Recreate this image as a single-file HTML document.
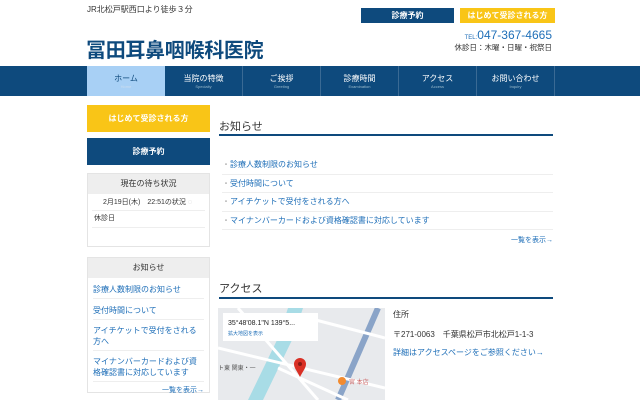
<!DOCTYPE html>
<html><head><meta charset="utf-8"><style>
*{margin:0;padding:0;box-sizing:border-box}
body{width:640px;height:400px;overflow:hidden;background:#fff;font-family:"Liberation Sans","Noto Sans CJK JP",sans-serif;color:#333;position:relative}
.a{position:absolute}
.lnk{color:#1f6fb8}
</style></head><body>
<div class="a" style="left:87px;top:4px;font-size:8px">JR北松戸駅西口より徒歩３分</div>
<div class="a" style="left:361px;top:8px;width:93px;height:15px;background:#0e4a7d;color:#fff;font-size:8px;text-align:center;line-height:15px;font-weight:bold">診療予約</div>
<div class="a" style="left:460px;top:8px;width:95px;height:15px;background:#f9c517;color:#fff;font-size:8px;text-align:center;line-height:15px;font-weight:bold">はじめて受診される方</div>
<div class="a" style="left:86px;top:34px;font-size:20px;color:#0e4a7d;font-weight:bold;letter-spacing:-0.3px">冨田耳鼻咽喉科医院</div>
<div class="a" style="right:88px;top:28px;font-size:12px;color:#1f6fb8"><span style="font-size:6px">TEL:</span>047-367-4665</div>
<div class="a" style="right:88px;top:42px;font-size:7.5px">休診日：木曜・日曜・祝祭日</div>
<div class="a" style="left:0;top:66px;width:640px;height:30px;background:#0e4a7d"></div>
<div class="a" style="left:87px;top:66px;display:flex">
<div style="width:78px;height:30px;background:#a8d0f5;color:#0e4a7d;text-align:center;font-size:8px;padding-top:7px">ホーム<div style="font-size:4px;color:#cde">Home</div></div>
<div style="width:78px;height:30px;border-right:1px solid #3a6a94;color:#fff;text-align:center;font-size:8px;padding-top:7px">当院の特徴<div style="font-size:4px;color:#9bc">Specialty</div></div>
<div style="width:78px;height:30px;border-right:1px solid #3a6a94;color:#fff;text-align:center;font-size:8px;padding-top:7px">ご挨拶<div style="font-size:4px;color:#9bc">Greeting</div></div>
<div style="width:78px;height:30px;border-right:1px solid #3a6a94;color:#fff;text-align:center;font-size:8px;padding-top:7px">診療時間<div style="font-size:4px;color:#9bc">Examination</div></div>
<div style="width:78px;height:30px;border-right:1px solid #3a6a94;color:#fff;text-align:center;font-size:8px;padding-top:7px">アクセス<div style="font-size:4px;color:#9bc">Access</div></div>
<div style="width:78px;height:30px;border-right:1px solid #3a6a94;color:#fff;text-align:center;font-size:8px;padding-top:7px">お問い合わせ<div style="font-size:4px;color:#9bc">Inquiry</div></div>
</div>
<div class="a" style="left:87px;top:105px;width:123px;height:27px;background:#f9c517;color:#fff;font-size:8px;text-align:center;line-height:27px;font-weight:bold">はじめて受診される方</div>
<div class="a" style="left:87px;top:138px;width:123px;height:27px;background:#0e4a7d;color:#fff;font-size:8px;text-align:center;line-height:27px;font-weight:bold">診療予約</div>
<div class="a" style="left:87px;top:173px;width:123px;height:74px;border:1px solid #e4e4e4">
<div style="height:20px;background:#eee;text-align:center;font-size:8px;line-height:20px">現在の待ち状況</div>
<div style="height:17px;font-size:7px;line-height:17px;padding-left:11px;border-bottom:1px solid #eee;margin:0 4px">2月19日(木)　22:51の状況 <span style="color:#bbb">◌</span></div>
<div style="font-size:7px;line-height:16px;padding-left:2px;border-bottom:1px solid #eee;margin:0 4px">休診日</div>
</div>
<div class="a" style="left:87px;top:257px;width:123px;height:136px;border:1px solid #e4e4e4;font-size:8px">
<div style="height:20px;background:#eee;text-align:center;line-height:20px">お知らせ</div>
<div style="margin:0 5px" class="lnk">
<div style="padding:6px 0 3px;border-bottom:1px solid #eee">診療人数制限のお知らせ</div>
<div style="padding:6px 0 3px;border-bottom:1px solid #eee">受付時間について</div>
<div style="padding:5px 0 3px;border-bottom:1px solid #eee;line-height:11px">アイチケットで受付をされる方へ</div>
<div style="padding:5px 0 3px;border-bottom:1px solid #eee;line-height:11px">マイナンバーカードおよび資格確認書に対応しています</div>
<div style="text-align:right;font-size:7px;padding-top:3px">一覧を表示→</div>
</div></div>
<div class="a" style="left:219px;top:118px;font-size:11px">お知らせ</div>
<div class="a" style="left:219px;top:134px;width:334px;height:2px;background:#0e4a7d"></div>
<div class="a lnk" style="left:222px;top:156px;width:331px;font-size:8px">
<div style="height:18.5px;line-height:18px;border-bottom:1px solid #eee"><span style="color:#aaa">・</span>診療人数制限のお知らせ</div>
<div style="height:18.5px;line-height:18px;border-bottom:1px solid #eee"><span style="color:#aaa">・</span>受付時間について</div>
<div style="height:18.5px;line-height:18px;border-bottom:1px solid #eee"><span style="color:#aaa">・</span>アイチケットで受付をされる方へ</div>
<div style="height:18.5px;line-height:18px;border-bottom:1px solid #eee"><span style="color:#aaa">・</span>マイナンバーカードおよび資格確認書に対応しています</div>
<div style="text-align:right;font-size:7px;padding-top:5px">一覧を表示→</div>
</div>
<div class="a" style="left:219px;top:280px;font-size:11px">アクセス</div>
<div class="a" style="left:219px;top:297px;width:334px;height:2px;background:#0e4a7d"></div>
<svg class="a" style="left:218px;top:308px" width="167" height="92">
<rect width="167" height="92" fill="#e8eaed"/>
<path d="M30 92 L60 30 L70 0 L85 0 L75 30 L45 92Z" fill="#a8dce6"/>
<path d="M120 92 L160 0" stroke="#8aa4c8" stroke-width="6"/>
<path d="M0 40 L167 80 M20 0 L100 92 M90 10 L167 30 M60 60 L130 92" stroke="#fff" stroke-width="3"/>
<rect x="5" y="5" width="95" height="28" fill="#fff"/>
<text x="10" y="17" font-size="7" fill="#222">35°48'08.1"N 139°5...</text>
<text x="10" y="27" font-size="5" fill="#1f6fb8">拡大地図を表示</text>
<path d="M82 69 C79 63 76 60 76 56 A6 6 0 0 1 88 56 C88 60 85 63 82 69Z" fill="#d93025"/>
<circle cx="82" cy="56" r="2" fill="#8a1a14"/>
<circle cx="124" cy="73" r="4" fill="#f28b30"/>
<text x="131" y="76" font-size="6" fill="#c66">宮 本店</text>
<text x="0" y="62" font-size="6" fill="#555">ト東 関東・一</text>
</svg>
<div class="a" style="left:393px;top:309px;font-size:8px">住所</div>
<div class="a" style="left:393px;top:329px;font-size:8px">〒271-0063　千葉県松戸市北松戸1-1-3</div>
<div class="a lnk" style="left:393px;top:347px;font-size:8px">詳細はアクセスページをご参照ください→</div>
</body></html>
